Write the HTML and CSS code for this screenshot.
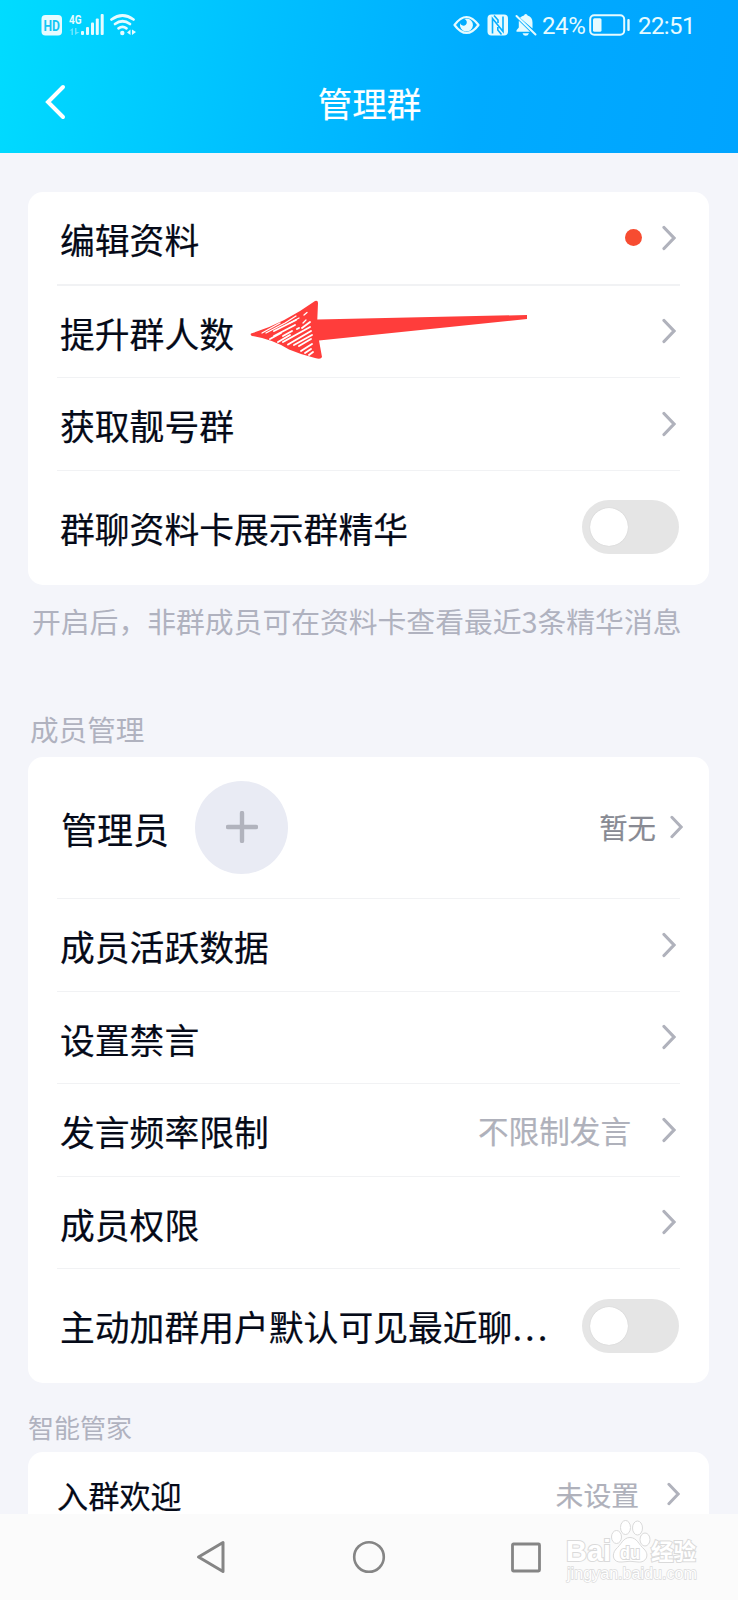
FILE: index.html
```html
<!DOCTYPE html>
<html lang="zh-CN">
  <head>
    <meta charset="UTF-8" />
    <meta name="viewport" content="width=device-width, initial-scale=1.0" />
    <title>管理群</title>
    <link rel="stylesheet" href="styles.css">
  </head>
  <body>
    <!-- shared chevron -->
    <svg width="0" height="0" class="defs">
      <symbol id="chevron" viewBox="0 0 14 26">
        <path d="M2 2.5 L12 13 L2 23.5" fill="none" stroke="currentColor" stroke-width="3.2" stroke-linecap="round" stroke-linejoin="miter" />
      </symbol>
    </svg>

    <header class="header">
      <div class="status">
        <svg class="status-left" width="98" height="24" viewBox="40 12 98 24">
          <rect x="41.5" y="15" width="20.500" height="20.500" rx="4" fill="#e6fbff" />
          <text x="43.500" y="30.500" class="hd" textLength="16.500" lengthAdjust="spacingAndGlyphs">HD</text>
          <text x="69" y="24" class="net" textLength="12.500" lengthAdjust="spacingAndGlyphs">4G</text>
          <g fill="#e6fbff">
            <path opacity=".45" d="M69.500 30.500 L73 28 V35 H71.500 V30.500 Z M75 28 H76.500 V32 H79.500 L75 35 Z" />
            <rect x="81" y="31" width="3" height="4" rx="1" />
            <rect x="86" y="27" width="3" height="8" rx="1" />
            <rect x="91" y="22.500" width="3" height="12.500" rx="1" />
            <rect x="95.800" y="18.500" width="3" height="16.500" rx="1" />
            <rect x="100.700" y="14" width="3" height="21" rx="1" />
            <circle cx="122.300" cy="33" r="2.200" />
            <path d="M127 32.500 L130.500 29.500 V35 Z M132 29.500 L136 32 L132 35 Z" />
          </g>
          <g fill="none" stroke="#e6fbff" stroke-width="2.700" stroke-linecap="round">
            <path d="M111.500 19.500 Q122.500 11.500 133.500 19.500" />
            <path d="M115 24 Q122.500 18.500 130 24" />
            <path d="M118.500 28.300 Q122.500 25.300 126.500 28.300" />
          </g>
        </svg>

        <div class="status-right">
          <svg width="27" height="20" viewBox="0 0 27 20">
            <path d="M1.500 10 Q13.500 -6 25.500 10 Q13.500 26 1.500 10 Z" fill="none" stroke="#e6fbff" stroke-width="2.200" stroke-linejoin="round" />
            <path d="M13.500 3.500 A6.500 6.500 0 1 1 7.200 8.300 A3.400 3.400 0 1 0 11.500 4 Z" fill="#e6fbff" />
          </svg>
          <svg class="nfc" width="22" height="22" viewBox="0 0 22 22">
            <rect x=".5" y=".5" width="20.500" height="21" rx="4" fill="#e6fbff" />
            <path d="M5.500 19.500 V4.500 L16 17.500 V2.500 M7 1.500 L11 6 V9 M10.800 13 V16 L14.500 20.500" fill="none" stroke="#06aeff" stroke-width="1.600" />
          </svg>
          <svg class="bell" width="22" height="22" viewBox="0 0 22 22">
            <path d="M5 3.800 Q7 1.800 9 1.600 Q9.200 0 10.800 0 Q12.300 0 12.600 1.600 Q17.500 3 17.500 8.500 V14.500 Z M3.800 6.700 L15 17.800 H1.500 V16.300 L3.800 13.500 Z M7.500 19.200 H14 Q13 21.800 10.800 21.800 Q8.300 21.800 7.500 19.200 Z" fill="#e6fbff" />
            <path d="M1.500 2 L20.500 20.500" stroke="#e6fbff" stroke-width="2" stroke-linecap="round" />
          </svg>
          <span class="percent">24%</span>
          <svg class="battery" width="42" height="22" viewBox="0 0 42 22">
            <rect x="1.200" y="1.200" width="34" height="19.600" rx="4" fill="none" stroke="#e6fbff" stroke-width="2" />
            <rect x="4" y="4.200" width="8.500" height="13.600" rx="1.500" fill="#e6fbff" />
            <rect x="38.300" y="5" width="2.400" height="12" rx="1" fill="#e6fbff" />
          </svg>
          <span class="time">22:51</span>
        </div>
      </div>

      <div class="title-bar">
        <svg class="back" width="24" height="38" viewBox="0 0 24 38">
          <path d="M19 4 L4 19 L19 34" fill="none" stroke="#fff" stroke-width="4" stroke-linecap="round" />
        </svg>
        <h1>管理群</h1>
      </div>
    </header>

    <main class="content">
      <section class="card">
        <div class="row">
          <span class="label">编辑资料</span>
          <span class="dot"></span>
          <svg class="chevron"><use href="#chevron" /></svg>
        </div>
        <div class="row">
          <span class="label">提升群人数</span>
          <svg class="chevron"><use href="#chevron" /></svg>
          <!-- hand drawn arrow -->
          <svg class="arrow" width="280" height="62" viewBox="250 300 280 62">
            <path d="M251 333.500 Q283 324 315 301 Q318 300 318 303 L317.300 319.500 L527 315 V319 L319 340.500 L322 357 Q321 360 315 358 Q302 355 289 349.500 Q272 339 252 336 Q250 335 251 333.500 Z" fill="#ff3d3b" />
            <g stroke="#fff" stroke-linecap="round" fill="none">
              <path stroke-width="1.300" d="M262 333 L280 323 M266 333 L284 323.500 M285 323 L296 316 M289 323.500 L299 318 M304 315 L307 312.500 M303 323 L306 320" />
              <path stroke-width="1.900" d="M270 339 L281 333 M274 331 L296 320 M274 336 L295 325 M278 342 L290 335 M283 342 L310 327 M288 344.500 L311 331 M294 345 L312 335 M299 346 L311 339 M301 351 L312 344 M305 353 L311 349 M309 355 L313 352 M297 329 L299 328 M302 328 L310 322 M283 336 L292 331" />
            </g>
          </svg>
        </div>
        <div class="row">
          <span class="label">获取靓号群</span>
          <svg class="chevron"><use href="#chevron" /></svg>
        </div>
        <div class="row row-switch">
          <span class="label">群聊资料卡展示群精华</span>
          <span class="switch"></span>
        </div>
      </section>
      <p class="hint">开启后，非群成员可在资料卡查看最近3条精华消息</p>

      <h2>成员管理</h2>
      <section class="card">
        <div class="row row-admin">
          <span class="label">管理员</span>
          <span class="add">
            <svg width="32" height="32" viewBox="0 0 32 32">
              <path d="M16 2 V30 M2 16 H30" stroke="#b1b3bd" stroke-width="4.400" stroke-linecap="round" />
            </svg>
          </span>
          <span class="value">暂无</span>
          <svg class="chevron"><use href="#chevron" /></svg>
        </div>
        <div class="row">
          <span class="label">成员活跃数据</span>
          <svg class="chevron"><use href="#chevron" /></svg>
        </div>
        <div class="row">
          <span class="label">设置禁言</span>
          <svg class="chevron"><use href="#chevron" /></svg>
        </div>
        <div class="row">
          <span class="label">发言频率限制</span>
          <span class="value">不限制发言</span>
          <svg class="chevron"><use href="#chevron" /></svg>
        </div>
        <div class="row">
          <span class="label">成员权限</span>
          <svg class="chevron"><use href="#chevron" /></svg>
        </div>
        <div class="row row-switch">
          <span class="label">主动加群用户默认可见最近聊<span class="dots">...</span></span>
          <span class="switch"></span>
        </div>
      </section>

      <h2 class="small">智能管家</h2>
      <section class="card card-last">
        <div class="row row-welcome">
          <span class="label">入群欢迎</span>
          <span class="value">未设置</span>
          <svg class="chevron"><use href="#chevron" /></svg>
        </div>
      </section>
    </main>

    <nav class="nav">
      <svg width="32" height="36" viewBox="0 0 32 36">
        <path d="M28 3.500 V32.500 L3.500 18 Z" fill="none" stroke="#858585" stroke-width="3" stroke-linejoin="round" />
      </svg>
      <svg width="34" height="34" viewBox="0 0 34 34">
        <circle cx="17" cy="17" r="14.800" fill="none" stroke="#858585" stroke-width="2.600" />
      </svg>
      <svg width="32" height="32" viewBox="0 0 32 32">
        <rect x="1.500" y="3" width="27" height="27" rx="1" fill="none" stroke="#858585" stroke-width="2.800" />
      </svg>

      <svg class="watermark" width="140" height="70" viewBox="562 1516 140 70">
        <g fill="#fff" stroke="#dadada" stroke-width="1">
          <ellipse cx="616.500" cy="1537" rx="5" ry="6.500" />
          <ellipse cx="625.500" cy="1527.500" rx="5" ry="7" />
          <ellipse cx="637.500" cy="1528" rx="5" ry="7" />
          <ellipse cx="645" cy="1539.500" rx="5" ry="6.500" />
          <path d="M630 1537.500 C637 1537.500 639 1545 644 1549 C650 1555 646 1563 638 1562 Q630 1560.500 622 1562 C613 1563 611 1555 616 1549 C621 1545 623 1537.500 630 1537.500 Z" />
        </g>
        <g class="mark">
          <text x="566" y="1561" font-size="29" textLength="45" lengthAdjust="spacingAndGlyphs">Bai</text>
          <text x="620" y="1558.500" font-size="18" textLength="20" lengthAdjust="spacingAndGlyphs">du</text>
          <text x="651" y="1560" font-size="22.500" textLength="45">经验</text>
          <text class="url" x="567" y="1579" font-size="16" textLength="130" lengthAdjust="spacingAndGlyphs">jingyan.baidu.com</text>
        </g>
      </svg>
    </nav>
  </body>
</html>
```

FILE: styles.css
```css
:root {
  --text: #050a18;
  --muted: #b0b2bf;
  --page: #f4f5fa;
  --line: #f1f2f4;
}

* {
  box-sizing: border-box;
}

body {
  margin: 0;
  height: 1600px;
  overflow: hidden;
  display: flex;
  flex-direction: column;
  background: var(--page);
  color: var(--text);
  font-family: "Noto Sans CJK SC", sans-serif;
}

svg {
  flex: none;
  display: block;
}

.defs {
  position: absolute;
}

/* header */
.header {
  flex: none;
  height: 153px;
  background: linear-gradient(100deg, #00dcff 0%, #00c0ff 35%, #00abff 65%, #00a4ff 100%);
  color: #fff;
}

.status {
  display: flex;
  justify-content: space-between;
  height: 50px;
  padding: 12px 42px 0 40px;
}

.status-right {
  display: flex;
  align-items: center;
  height: 26px;
  color: #e6fbff;
  font-family: Roboto, sans-serif;
  font-size: 24px;
  line-height: 26px;
}

.hd {
  font: 700 15px Roboto, sans-serif;
  fill: #12c6f5;
}

.net {
  font: 700 13.5px Roboto, sans-serif;
  fill: #e6fbff;
}

.nfc {
  margin-left: 7px;
}

.bell {
  margin-left: 6px;
}

.percent {
  width: 47px;
  margin-left: 5px;
  padding-top: 2px;
  letter-spacing: -0.4px;
}

.battery {
  margin-right: 7px;
}

.time {
  width: 58px;
  padding-top: 2px;
  letter-spacing: -0.6px;
}

.title-bar {
  display: grid;
  grid-template-columns: 1fr auto 1fr;
  align-items: center;
  height: 104px;
  padding: 0 43px 0 44px;
}

h1 {
  margin: 0;
  font-size: 34.5px;
  font-weight: 400;
  line-height: 48px;
  -webkit-text-stroke: 0.2px;
}

/* settings list */
.content {
  flex: 1;
  min-height: 0;
  overflow: hidden;
  padding: 39px 29px 0 28px;
}

.card {
  padding: 0 29px;
  border-radius: 15px;
  background: #fff;
}

.row {
  position: relative;
  display: flex;
  align-items: center;
  height: 92.5px;
  padding: 0 4px 0 3px;
  border-bottom: 1px solid var(--line);
}

.row:first-child {
  height: 93.5px;
  border-bottom-width: 2px;
}

.row:last-child {
  border-bottom: none;
}

.label {
  margin-right: auto;
  padding-top: 3px;
  font-size: 34.8px;
  line-height: 50px;
  white-space: nowrap;
  -webkit-text-stroke: 0.2px;
}

.chevron {
  width: 14px;
  height: 26px;
  margin-left: 30px;
  color: #b0b2bc;
}

.dot {
  width: 17px;
  height: 17px;
  margin-right: -10px;
  border-radius: 50%;
  background: #f74c31;
}

.arrow {
  position: absolute;
  left: 193px;
  top: 14px;
}

.row-switch {
  height: 114px;
  padding: 0 1px 1px 3px;
}

.row-switch .label {
  padding-top: 1px;
}

.switch {
  width: 97px;
  height: 54px;
  padding: 8px;
  border-radius: 27px;
  background: #e5e5e5;
}

.switch::before {
  content: "";
  display: block;
  width: 38px;
  height: 38px;
  border-radius: 50%;
  background: #fff;
  box-shadow: 0 0 1px rgba(0, 0, 0, 0.2);
}

.dots {
  letter-spacing: 3px;
}

.value {
  color: #afb1bb;
  font-size: 30.6px;
  line-height: 44px;
  -webkit-text-stroke: 0.2px;
}

.row .value + .chevron {
  margin-left: 31px;
}

.hint {
  margin: 15px 0 0 4px;
  color: var(--muted);
  font-size: 28.8px;
  line-height: 42px;
  white-space: nowrap;
}

h2 {
  margin: 66px 0 7px 2px;
  color: var(--muted);
  font-size: 28.6px;
  font-weight: 400;
  line-height: 42px;
}

h2.small {
  margin: 25px 0 6px 0;
  font-size: 26px;
  line-height: 38px;
}

/* admin row */
.row.row-admin {
  height: 142.5px;
  padding: 0 0 0 4px;
  border-bottom-width: 1px;
}

.row-admin .label {
  margin-right: 26px;
  padding-top: 2px;
  font-size: 36px;
}

.add {
  display: flex;
  align-items: center;
  justify-content: center;
  width: 93px;
  height: 93px;
  margin-right: auto;
  border-radius: 50%;
  background: #e9ebf4;
}

.row-admin .value {
  color: #888a93;
  font-size: 28.4px;
}

.row.row-admin .chevron {
  width: 13px;
  height: 24px;
  margin-left: 14px;
  margin-right: -3px;
}

.row.row-welcome {
  height: 84px;
  padding: 0;
}

.row-welcome .label {
  padding-top: 2px;
  font-size: 31.2px;
}

.row-welcome .value {
  font-size: 27.8px;
}

.row.row-welcome .chevron {
  width: 13px;
  height: 24px;
  margin-left: 28px;
}

/* system navigation */
.nav {
  position: relative;
  flex: none;
  display: flex;
  align-items: center;
  justify-content: space-between;
  height: 86px;
  padding: 0 195px 0 195px;
  background: #fbfbfb;
}

.watermark {
  position: absolute;
  left: 562px;
  top: 2px;
}

.mark {
  font-family: "Liberation Sans", "Noto Sans CJK SC", sans-serif;
  font-weight: 700;
  fill: #fff;
  stroke: #dadada;
  stroke-width: 2px;
  paint-order: stroke;
}

.mark .url {
  font-weight: 400;
  stroke-width: 1.3px;
}
```
